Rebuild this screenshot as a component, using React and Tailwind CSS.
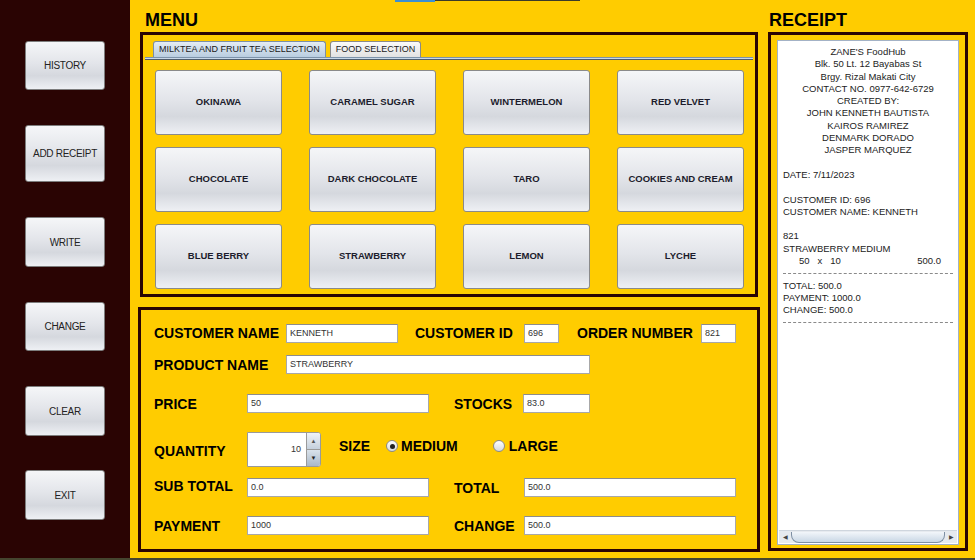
import React from "react";

const sideButtons = [
  { label: "HISTORY", cls: "mt-[41px] h-[49px]" },
  { label: "ADD RECEIPT", cls: "mt-[35px] h-[57px]" },
  { label: "WRITE", cls: "mt-[35px] h-[50px]" },
  { label: "CHANGE", cls: "mt-[35px] h-[49px]" },
  { label: "CLEAR", cls: "mt-[35px] h-[50px]" },
  { label: "EXIT", cls: "mt-[34px] h-[50px]" },
];

const drinks = [
  "OKINAWA",
  "CARAMEL SUGAR",
  "WINTERMELON",
  "RED VELVET",
  "CHOCOLATE",
  "DARK CHOCOLATE",
  "TARO",
  "COOKIES AND CREAM",
  "BLUE BERRY",
  "STRAWBERRY",
  "LEMON",
  "LYCHE",
];

const btnBg =
  "bg-[linear-gradient(to_bottom,#f5f6f8_0%,#e3e5ea_45%,#d5d8de_72%,#eef0f4_100%)]";

function Field({ value, className }) {
  return (
    <div
      className={`h-[19px] bg-white border border-[#a8a8a8] border-t-[#8c8c8c] flex items-center pl-[3px] text-[9px] text-[#333] ${className}`}
    >
      {value}
    </div>
  );
}

function Label({ children, className }) {
  return (
    <div className={`shrink-0 text-[14px] font-bold text-black leading-none ${className}`}>
      {children}
    </div>
  );
}

function Radio({ checked }) {
  return (
    <div className="w-[12px] h-[12px] rounded-full border border-[#8a8a8a] bg-[linear-gradient(to_bottom,#ffffff,#d6d9de)] flex items-center justify-center">
      {checked && <div className="w-[5px] h-[5px] rounded-full bg-[#222]" />}
    </div>
  );
}

function Dashes() {
  return (
    <div className="h-[12.3px] flex items-center">
      <div className="w-full border-t border-dashed border-[#8a8a8a]" />
    </div>
  );
}

export default function App() {
  return (
    <div
      className="w-[975px] h-[560px] flex flex-col overflow-hidden"
      style={{ fontFamily: '"Liberation Sans", Arial, sans-serif' }}
    >
      <div className="flex h-[558px]">
        {/* sidebar */}
        <div className="w-[130px] bg-[#2a0403] flex flex-col items-start pl-[25px]">
          {sideButtons.map((b) => (
            <button
              key={b.label}
              className={`w-[80px] ${b.cls} ${btnBg} border border-[#7d7d7d] rounded-[3px] text-[10px] text-[#222] tracking-[-0.3px] flex items-center justify-center`}
            >
              {b.label}
            </button>
          ))}
        </div>

        {/* main */}
        <div className="relative flex-1 bg-[#ffcc00] flex">
          <div className="absolute top-0 left-[265px] flex">
            <div className="w-[40px] h-[2px] bg-[#3b8fd3]" />
            <div className="w-[145px] h-[1px] bg-[#3a3a2a]" />
          </div>

          {/* left column */}
          <div className="w-[633px] flex flex-col">
            <div className="h-[32px] pl-[15px] pt-[11px] text-[18px] font-bold leading-none text-black">
              MENU
            </div>
            <div className="ml-[10px] w-[618px] h-[265px] border-[3px] border-[#2a0403] flex flex-col">
              <div className="flex pl-[10px] pt-[6px] gap-[4px] items-end">
                <div className="h-[16px] px-[5px] flex items-center text-[9px] text-[#1a1a1a] border border-b-0 border-[#7b8fa6] rounded-t-[3px] bg-[linear-gradient(to_bottom,#e4ecf4,#b9cde0)]">
                  MILKTEA AND FRUIT TEA SELECTION
                </div>
                <div className="h-[16px] px-[5px] flex items-center text-[9px] text-[#1a1a1a] border border-b-0 border-[#8a8a8a] rounded-t-[3px] bg-[linear-gradient(to_bottom,#fafafa,#e2e2e2)]">
                  FOOD SELECTION
                </div>
              </div>
              <div className="mx-[2px] h-[3px] border-t border-b border-t-[#7d93aa] border-b-[#4f5c6a] bg-[#c9d8e8]" />
              <div className="grid grid-cols-[repeat(4,127px)] auto-rows-[65px] gap-x-[27px] gap-y-[12px] pl-[12px] pt-[10px]">
                {drinks.map((d) => (
                  <button
                    key={d}
                    className={`${btnBg} border border-[#8a8a8a] rounded-[3px] text-[9.5px] font-bold text-[#1c1c2c] flex items-center justify-center`}
                  >
                    {d}
                  </button>
                ))}
              </div>
            </div>

            <div className="mt-[10px] ml-[8px] w-[622px] h-[245px] border-[3px] border-[#2a0403] flex flex-col pl-[13px]">
              <div className="mt-[14px] flex items-center h-[19px]">
                <Label className="w-[132px] -mt-[2px]">CUSTOMER NAME</Label>
                <Field value="KENNETH" className="w-[112px]" />
                <Label className="ml-[17px] w-[109px] -mt-[2px]">CUSTOMER ID</Label>
                <Field value="696" className="w-[35px]" />
                <Label className="ml-[18px] w-[124px] -mt-[2px]">ORDER NUMBER</Label>
                <Field value="821" className="w-[35px]" />
              </div>
              <div className="mt-[12px] flex items-center h-[19px]">
                <Label className="w-[132px]">PRODUCT NAME</Label>
                <Field value="STRAWBERRY" className="w-[304px]" />
              </div>
              <div className="mt-[20px] flex items-center h-[19px]">
                <Label className="w-[93px]">PRICE</Label>
                <Field value="50" className="w-[182px]" />
                <Label className="ml-[25px] w-[69px]">STOCKS</Label>
                <Field value="83.0" className="w-[67px]" />
              </div>
              <div className="mt-[19px] flex items-center h-[35px]">
                <Label className="w-[93px] mt-[3px]">QUANTITY</Label>
                <div className="w-[74px] h-[35px] flex border border-[#9a9a9a] rounded-r-[3px] bg-white">
                  <div className="flex-1 flex items-center justify-end pr-[5px] text-[9px] text-[#333]">
                    10
                  </div>
                  <div className="w-[14px] flex flex-col border-l border-[#9a9a9a]">
                    <div className="flex-1 flex items-center justify-center text-[6px] text-[#555] bg-[linear-gradient(to_bottom,#f0f3f7,#c5d0dc)] rounded-tr-[2px]">
                      ▲
                    </div>
                    <div className="flex-1 flex items-center justify-center text-[6px] text-[#222] border-t border-[#9a9a9a] bg-[linear-gradient(to_bottom,#d9e2eb,#a9b8c8)] rounded-br-[2px]">
                      ▼
                    </div>
                  </div>
                </div>
                <div className="flex items-center mb-[7px]">
                  <Label className="ml-[18px] w-[47px]">SIZE</Label>
                  <Radio checked />
                  <Label className="ml-[3px]">MEDIUM</Label>
                  <div className="ml-[35px]">
                    <Radio />
                  </div>
                  <Label className="ml-[4px]">LARGE</Label>
                </div>
              </div>
              <div className="mt-[11px] flex items-center h-[19px]">
                <Label className="w-[93px] -mt-[3px]">SUB TOTAL</Label>
                <Field value="0.0" className="w-[182px]" />
                <Label className="ml-[25px] w-[70px]">TOTAL</Label>
                <Field value="500.0" className="w-[212px]" />
              </div>
              <div className="mt-[19px] flex items-center h-[19px]">
                <Label className="w-[93px]">PAYMENT</Label>
                <Field value="1000" className="w-[182px]" />
                <Label className="ml-[25px] w-[70px]">CHANGE</Label>
                <Field value="500.0" className="w-[212px]" />
              </div>
            </div>
          </div>

          {/* receipt column */}
          <div className="flex-1 flex flex-col">
            <div className="h-[32px] pl-[6px] pt-[11px] text-[18px] font-bold leading-none text-black">
              RECEIPT
            </div>
            <div className="ml-[5px] w-[200px] h-[519px] border-[3px] border-[#2a0403] pt-[5px] px-[6px] pb-[3px]">
              <div className="h-full bg-white border border-[#a3b2c6] flex flex-col text-[9.5px] text-[#222] leading-[12.3px]">
                <div className="flex-1 pt-[5px] px-[5px]">
                  <div className="text-center">
                    <div>ZANE'S FoodHub</div>
                    <div>Blk. 50 Lt. 12 Bayabas St</div>
                    <div>Brgy. Rizal Makati City</div>
                    <div>CONTACT NO. 0977-642-6729</div>
                    <div>CREATED BY:</div>
                    <div>JOHN KENNETH BAUTISTA</div>
                    <div>KAIROS RAMIREZ</div>
                    <div>DENMARK DORADO</div>
                    <div>JASPER MARQUEZ</div>
                  </div>
                  <div className="h-[12.3px]" />
                  <div>DATE: 7/11/2023</div>
                  <div className="h-[12.3px]" />
                  <div>CUSTOMER ID: 696</div>
                  <div>CUSTOMER NAME: KENNETH</div>
                  <div className="h-[12.3px]" />
                  <div>821</div>
                  <div>STRAWBERRY MEDIUM</div>
                  <div className="flex pl-[16px] pr-[12px]">
                    <span>50</span>
                    <span className="ml-[8px]">x</span>
                    <span className="ml-[8px]">10</span>
                    <span className="ml-auto">500.0</span>
                  </div>
                  <Dashes />
                  <div>TOTAL: 500.0</div>
                  <div>PAYMENT: 1000.0</div>
                  <div>CHANGE: 500.0</div>
                  <Dashes />
                </div>
                <div className="h-[13px] mb-[1px] mx-[1px] flex items-center bg-[#e6eaef] border-t border-[#cfd6de]">
                  <div className="w-[12px] text-[6px] text-[#444] flex justify-center">◀</div>
                  <div className="flex-1 h-[11px] rounded-b-[8px] border border-[#7d8fa3] border-t-0 bg-[linear-gradient(to_bottom,#f2f6fa,#c9d7e5)]" />
                  <div className="w-[12px] text-[6px] text-[#444] flex justify-center">▶</div>
                </div>
              </div>
            </div>
          </div>
        </div>
      </div>
      <div className="h-[2px] bg-[#45452f]" />
    </div>
  );
}
